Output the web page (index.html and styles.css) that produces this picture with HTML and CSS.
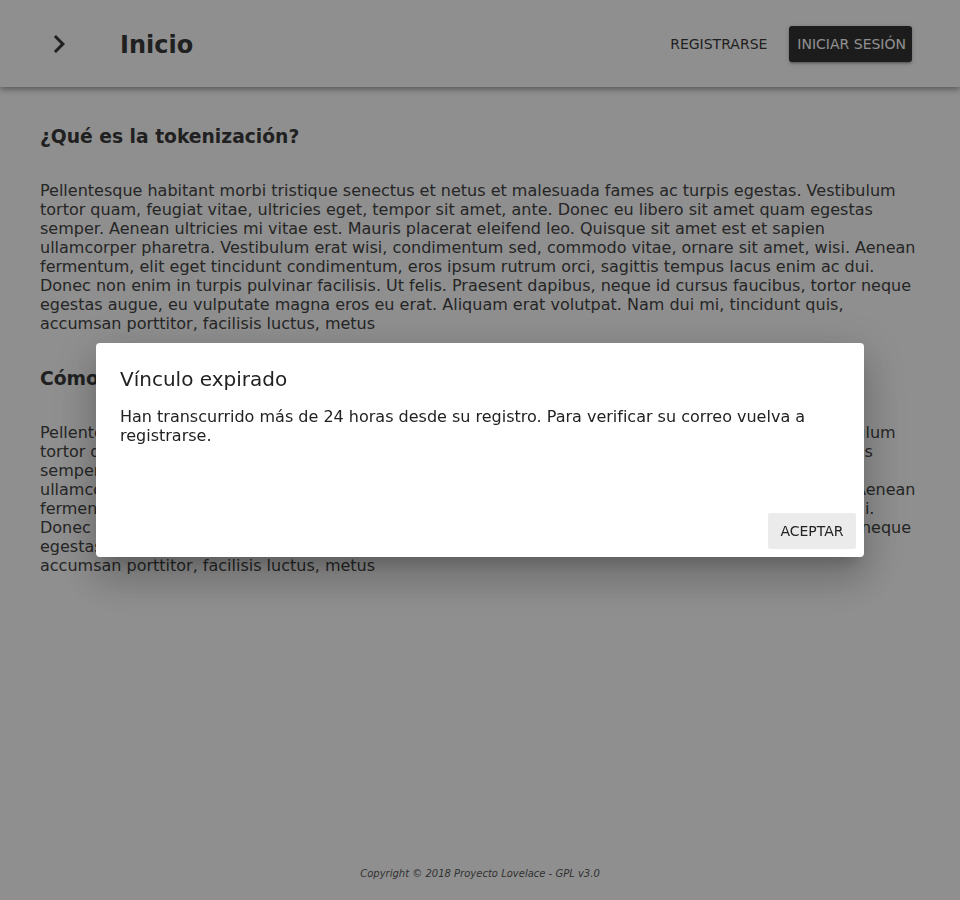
FILE: index.html
```html
<!DOCTYPE html>
<html lang="es">
<head>
<meta charset="utf-8">
<title>Inicio</title>
<link rel="stylesheet" href="styles.css">
</head>
<body>
<div class="page">
  <header class="appbar">
    <span class="menu-icon">
      <svg viewBox="0 0 24 24" width="36" height="36"><path d="M10 6L8.59 7.41 13.17 12l-4.58 4.59L10 18l6-6z" fill="currentColor"/></svg>
    </span>
    <h1 class="appbar-title">Inicio</h1>
    <nav class="appbar-actions">
      <button class="btn btn-text">REGISTRARSE</button>
      <button class="btn btn-dark">INICIAR SESIÓN</button>
    </nav>
  </header>
  <main class="content">
    <h3 class="section-title">¿Qué es la tokenización?</h3>
    <p class="section-text">Pellentesque habitant morbi tristique senectus et netus et malesuada fames ac turpis egestas. Vestibulum tortor quam, feugiat vitae, ultricies eget, tempor sit amet, ante. Donec eu libero sit amet quam egestas semper. Aenean ultricies mi vitae est. Mauris placerat eleifend leo. Quisque sit amet est et sapien ullamcorper pharetra. Vestibulum erat wisi, condimentum sed, commodo vitae, ornare sit amet, wisi. Aenean fermentum, elit eget tincidunt condimentum, eros ipsum rutrum orci, sagittis tempus lacus enim ac dui. Donec non enim in turpis pulvinar facilisis. Ut felis. Praesent dapibus, neque id cursus faucibus, tortor neque egestas augue, eu vulputate magna eros eu erat. Aliquam erat volutpat. Nam dui mi, tincidunt quis, accumsan porttitor, facilisis luctus, metus</p>
    <h3 class="section-title">Cómo funciona</h3>
    <p class="section-text">Pellentesque habitant morbi tristique senectus et netus et malesuada fames ac turpis egestas. Vestibulum tortor quam, feugiat vitae, ultricies eget, tempor sit amet, ante. Donec eu libero sit amet quam egestas semper. Aenean ultricies mi vitae est. Mauris placerat eleifend leo. Quisque sit amet est et sapien ullamcorper pharetra. Vestibulum erat wisi, condimentum sed, commodo vitae, ornare sit amet, wisi. Aenean fermentum, elit eget tincidunt condimentum, eros ipsum rutrum orci, sagittis tempus lacus enim ac dui. Donec non enim in turpis pulvinar facilisis. Ut felis. Praesent dapibus, neque id cursus faucibus, tortor neque egestas augue, eu vulputate magna eros eu erat. Aliquam erat volutpat. Nam dui mi, tincidunt quis, accumsan porttitor, facilisis luctus, metus</p>
  </main>
  <footer class="footer">Copyright © 2018 Proyecto Lovelace - GPL v3.0</footer>
</div>
<div class="backdrop">
  <div class="dialog" role="dialog">
    <h2 class="dialog-title">Vínculo expirado</h2>
    <div class="dialog-content">Han transcurrido más de 24 horas desde su registro. Para verificar su correo vuelva a registrarse.</div>
    <div class="dialog-actions">
      <button class="btn btn-light">ACEPTAR</button>
    </div>
  </div>
</div>
</body>
</html>
```
FILE: styles.css
```css
* { box-sizing: border-box; }
html, body { margin: 0; padding: 0; }
body {
  font-family: "DejaVu Sans", sans-serif;
  background: #ffffff;
  color: #444;
}
.page {
  min-height: 900px;
  display: flex;
  flex-direction: column;
}
.appbar {
  height: 87px;
  display: flex;
  align-items: center;
  padding: 0 48px 0 41px;
  background: #fff;
  box-shadow: 0 2px 4px -1px rgba(0,0,0,0.2), 0 4px 5px 0 rgba(0,0,0,0.14), 0 1px 10px 0 rgba(0,0,0,0.12);
}
.menu-icon {
  width: 36px;
  height: 36px;
  color: #3a3a3a;
  display: flex;
}
.appbar-title {
  margin: 0 0 0 43px;
  padding-top: 2px;
  font-size: 24px;
  font-weight: bold;
  color: #3a3a3a;
  line-height: 28px;
}
.appbar-actions {
  margin-left: auto;
  display: flex;
  align-items: center;
  gap: 14px;
}
.btn {
  font-family: "DejaVu Sans", sans-serif;
  font-size: 14px;
  height: 36px;
  border: none;
  border-radius: 2px;
  cursor: pointer;
  background: transparent;
  padding: 0 8px;
}
.btn-text { color: #3a3a3a; }
.btn-dark {
  background: #333;
  color: #fff;
  padding: 0 6px 0 8px;
  border-radius: 3px;
  box-shadow: 0 1px 5px 0 rgba(0,0,0,0.2), 0 2px 2px 0 rgba(0,0,0,0.14), 0 3px 1px -2px rgba(0,0,0,0.12);
}
.content {
  padding: 38px 40px 0;
}
.section-title {
  margin: 0 0 32px;
  font-size: 18.72px;
  line-height: 24px;
  font-weight: bold;
  color: #3a3a3a;
}
.section-text {
  margin: 0 0 34px;
  font-size: 16px;
  line-height: 19px;
}
.footer {
  margin-top: auto;
  text-align: center;
  font-size: 10px;
  font-style: italic;
  line-height: 12px;
  padding-bottom: 20px;
  color: #5a5a5a;
}
.backdrop {
  position: fixed;
  inset: 0;
  background: rgba(0,0,0,0.44);
  display: flex;
  align-items: center;
  justify-content: center;
}
.dialog {
  width: 768px;
  height: 214px;
  background: #fff;
  border-radius: 4px;
  display: flex;
  flex-direction: column;
  box-shadow: 0 11px 15px -7px rgba(0,0,0,0.2), 0 24px 38px 3px rgba(0,0,0,0.14), 0 9px 46px 8px rgba(0,0,0,0.12);
}
.dialog-title {
  margin: 0;
  padding: 25px 24px 0;
  font-size: 20px;
  font-weight: normal;
  line-height: 22px;
  color: #222;
}
.dialog-content {
  flex: 1;
  padding: 17px 24px 0;
  font-size: 16px;
  line-height: 19px;
  color: #222;
}
.dialog-actions {
  display: flex;
  justify-content: flex-end;
  padding: 0 8px 8px;
}
.btn-light {
  background: #ebebeb;
  color: #222;
  min-width: 88px;
  padding: 0 12px;
}
```
